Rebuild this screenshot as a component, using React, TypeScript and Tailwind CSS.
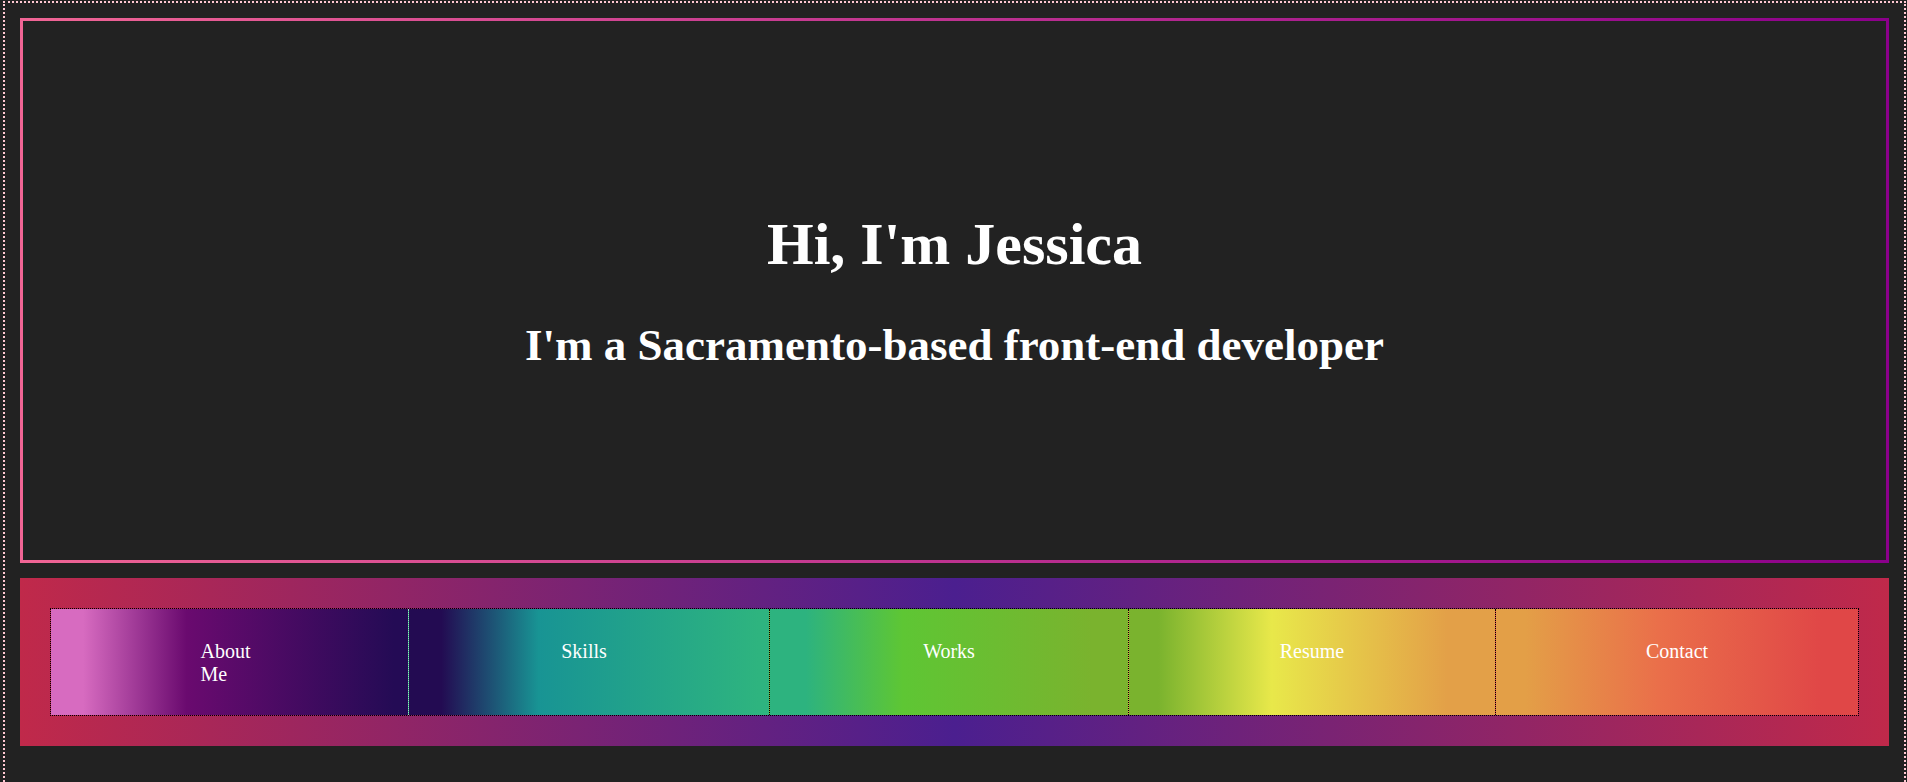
const items = [
  {
    label: 'About Me',
    bg: 'bg-[linear-gradient(to_right,#d76bc0_9%,#6a0a6f_38%,#240b55_96%)]',
    box: 'w-[357px]',
    narrow: true,
  },
  {
    label: 'Skills',
    bg: 'bg-[linear-gradient(to_right,#230b52_9%,#189494_36%,#2eb47f_97%)]',
    box: 'w-[361px] pr-[10px] border-l border-dotted border-l-[#9fdcc0]',
  },
  {
    label: 'Works',
    bg: 'bg-[linear-gradient(to_right,#2db37f_10%,#5ec634_37%,#7ab32e_90%)]',
    box: 'w-[359px] border-l border-dotted border-l-black',
  },
  {
    label: 'Resume',
    bg: 'bg-[linear-gradient(to_right,#7ab32e_8%,#e8e84a_39%,#e3a048_87%)]',
    box: 'w-[367px] border-l border-dotted border-l-black',
  },
  {
    label: 'Contact',
    bg: 'bg-[linear-gradient(to_right,#e39f47_8%,#ea6f4a_45%,#e04747_90%)]',
    box: 'flex-1 border-l border-dotted border-l-black',
  },
];

export default function App() {
  return (
    <div className="min-h-screen overflow-hidden bg-[#222222] font-['Liberation_Serif','Times_New_Roman',serif] text-white">
      <div className="ml-[3px] mr-px mt-px min-h-[900px] border-2 border-dotted border-[#ffc8d2] px-[15px] pt-[15px]">
        {/* hero */}
        <header className="flex h-[545px] flex-col items-center justify-center border-3 border-solid [border-image:linear-gradient(to_right,#f06595,#8b008b)_1]">
          <h1 className="text-[60px] font-bold leading-[69px]">Hi, I'm Jessica</h1>
          <h2 className="mt-[40px] text-[45px] font-bold leading-[52px]">
            I'm a Sacramento-based front-end developer
          </h2>
        </header>

        {/* nav */}
        <nav className="mt-[15px] bg-[linear-gradient(to_right,#c0294a,#4b1f8f,#c0294a)] p-[30px]">
          <ul className="flex h-[108px] border border-dotted border-black">
            {items.map((it) => (
              <li
                key={it.label}
                className={`flex shrink-0 justify-center pt-[31px] text-[20px] leading-[23px] ${it.bg} ${it.box}`}
              >
                {it.narrow ? (
                  <span className="inline-block w-[58px] text-left">{it.label}</span>
                ) : (
                  <span>{it.label}</span>
                )}
              </li>
            ))}
          </ul>
        </nav>
      </div>
    </div>
  );
}
